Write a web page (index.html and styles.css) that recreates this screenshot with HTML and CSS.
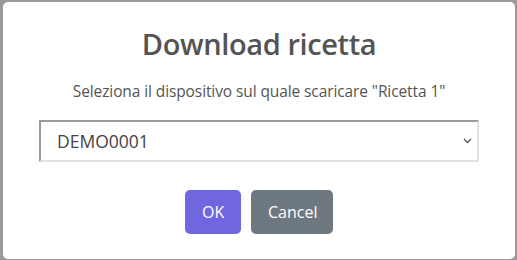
FILE: index.html
```html
<!DOCTYPE html>
<html lang="it">
<head>
  <meta charset="UTF-8" />
  <meta name="viewport" content="width=device-width, initial-scale=1.0" />
  <title>Download ricetta</title>
  <link rel="stylesheet" href="styles.css">
</head>
<body>
  <div class="modal">
    <h2 class="modal-title">Download ricetta</h2>
    <p class="modal-text">Seleziona il dispositivo sul quale scaricare "Ricetta 1"</p>

    <div class="select-wrap">
      <select class="device-select" id="device">
        <option>DEMO0001</option>
      </select>
      <svg class="select-arrow" width="9" height="6" viewBox="0 0 9 6">
        <path d="M1 1 L4.5 4.5 L8 1" fill="none" stroke="#555" stroke-width="1.3" />
      </svg>
    </div>

    <div class="actions">
      <button class="btn btn-confirm">OK</button>
      <button class="btn btn-cancel">Cancel</button>
    </div>
  </div>
</body>
</html>
```

FILE: styles.css
```css
* {
  margin: 0;
  padding: 0;
  box-sizing: border-box;
}

body {
  font-family: "Open Sans", "Noto Sans", sans-serif;
  background: #9a9a9a;
  height: 100vh;
  padding: 2px 2px 1px 3px;
  overflow: hidden;
}

.modal {
  background: white;
  border-radius: 5px;
  width: 512px;
  height: 257px;
  display: flex;
  flex-direction: column;
  align-items: center;
  padding-top: 24px;
}

.modal-title {
  color: #545454;
  font-size: 29px;
  font-weight: 600;
  letter-spacing: -0.4px;
  line-height: 36px;
}

.modal-text {
  color: #545454;
  font-size: 15.5px;
  letter-spacing: -0.1px;
  line-height: 24px;
  margin-top: 17px;
}

.select-wrap {
  position: relative;
  width: 440px;
  margin-top: 17px;
}

.device-select {
  width: 100%;
  height: 42px;
  appearance: none;
  -webkit-appearance: none;
  background: white;
  border: 2px solid;
  border-color: #9a9a9a #e2e2e2 #e2e2e2 #9a9a9a;
  border-radius: 0;
  padding: 0 16px;
  font-family: inherit;
  font-size: 17.5px;
  color: #444;
  outline: none;
}

.select-arrow {
  position: absolute;
  right: 7px;
  top: 18px;
  pointer-events: none;
}

.actions {
  display: flex;
  gap: 10px;
  margin-top: 28px;
}

.btn {
  height: 44px;
  padding: 0 17px;
  border: none;
  border-radius: 5px;
  color: white;
  font-family: inherit;
  font-size: 16px;
  cursor: pointer;
}

.btn-confirm {
  background: #7066e0;
  width: 56px;
}

.btn-cancel {
  background: #6e7881;
  width: 82px;
}
```
